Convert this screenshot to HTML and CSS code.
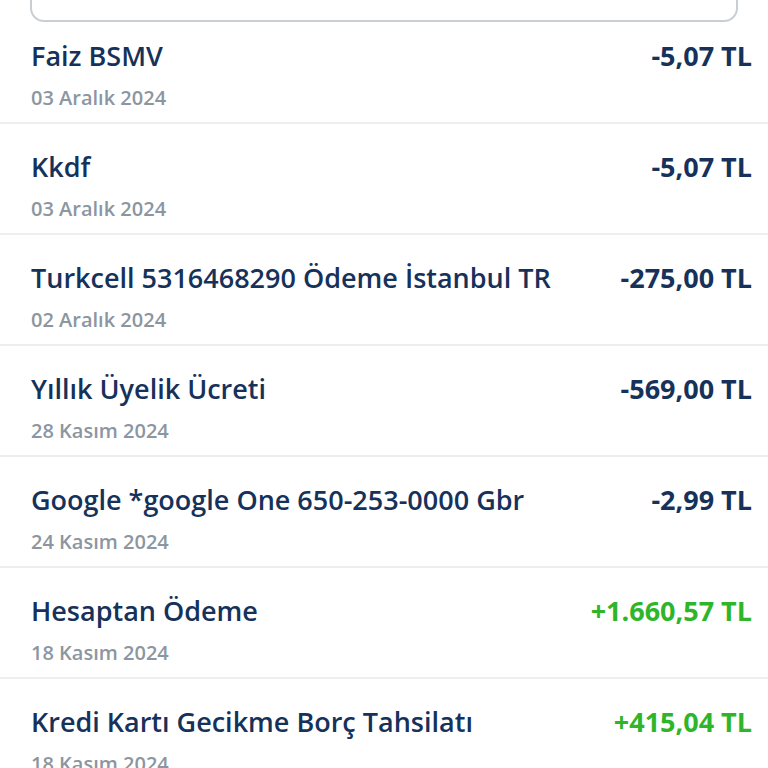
FILE: index.html
```html
<!DOCTYPE html>
<html lang="tr">
  <head>
    <meta charset="UTF-8" />
    <meta name="viewport" content="width=device-width, initial-scale=1.0" />
    <title>Hesap Hareketleri</title>
    <link rel="stylesheet" href="styles.css">
  </head>
  <body>
    <div class="page">
      <div class="search-box"></div>

      <ul class="tx-list">
        <li class="tx-row">
          <div class="tx-line">
            <span class="tx-title">Faiz BSMV</span>
            <span class="tx-amount">-5,07 TL</span>
          </div>
          <div class="tx-date">03 Aralık 2024</div>
        </li>
        <li class="tx-row">
          <div class="tx-line">
            <span class="tx-title">Kkdf</span>
            <span class="tx-amount">-5,07 TL</span>
          </div>
          <div class="tx-date">03 Aralık 2024</div>
        </li>
        <li class="tx-row">
          <div class="tx-line">
            <span class="tx-title">Turkcell 5316468290 Ödeme İstanbul TR</span>
            <span class="tx-amount">-275,00 TL</span>
          </div>
          <div class="tx-date">02 Aralık 2024</div>
        </li>
        <li class="tx-row">
          <div class="tx-line">
            <span class="tx-title">Yıllık Üyelik Ücreti</span>
            <span class="tx-amount">-569,00 TL</span>
          </div>
          <div class="tx-date">28 Kasım 2024</div>
        </li>
        <li class="tx-row">
          <div class="tx-line">
            <span class="tx-title">Google *google One 650-253-0000 Gbr</span>
            <span class="tx-amount">-2,99 TL</span>
          </div>
          <div class="tx-date">24 Kasım 2024</div>
        </li>
        <li class="tx-row">
          <div class="tx-line">
            <span class="tx-title">Hesaptan Ödeme</span>
            <span class="tx-amount positive">+1.660,57 TL</span>
          </div>
          <div class="tx-date">18 Kasım 2024</div>
        </li>
        <li class="tx-row">
          <div class="tx-line">
            <span class="tx-title">Kredi Kartı Gecikme Borç Tahsilatı</span>
            <span class="tx-amount positive">+415,04 TL</span>
          </div>
          <div class="tx-date">18 Kasım 2024</div>
        </li>
      </ul>
    </div>
  </body>
</html>
```

FILE: styles.css
```css
* {
  margin: 0;
  padding: 0;
  box-sizing: border-box;
  font-family: "Open Sans", "Noto Sans", sans-serif;
}

body {
  background-color: #ffffff;
  overflow: hidden;
}

.page {
  width: 768px;
}

.search-box {
  height: 60px;
  margin: -38px 30px 0 30px;
  border: 2px solid #c9ced3;
  border-radius: 14px;
  background-color: #ffffff;
}

.tx-list {
  list-style: none;
}

.tx-row {
  padding: 26px 16px 12px 31px;
  border-bottom: 2px solid #eceef0;
}

.tx-row:first-child {
  padding-top: 17px;
}

.tx-line {
  display: flex;
  justify-content: space-between;
  align-items: center;
  height: 32px;
}

.tx-title {
  font-size: 27px;
  font-weight: 600;
  color: #16325a;
  white-space: nowrap;
}

.tx-amount {
  font-size: 27px;
  font-weight: 700;
  color: #16325a;
  white-space: nowrap;
}

.tx-amount.positive {
  color: #2fb52a;
}

.tx-date {
  margin-top: 15px;
  height: 24px;
  line-height: 24px;
  font-size: 20px;
  font-weight: 600;
  color: #8c96a1;
}
```
